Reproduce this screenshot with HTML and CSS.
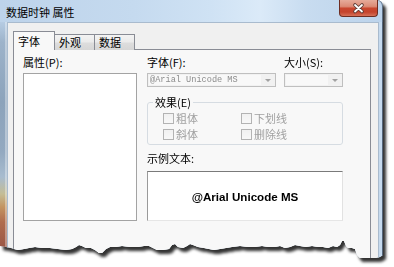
FILE: index.html
```html
<!DOCTYPE html>
<html lang="zh">
<head>
<meta charset="utf-8">
<title>数据时钟 属性</title>
<link rel="stylesheet" href="styles.css">
</head>
<body>
<div class="shadow">
  <div class="window">
    <div class="titlebar">
      <span class="title">数据时钟 属性</span>
      <div class="close">
        <svg width="39" height="17" viewBox="0 0 39 17">
          <path d="M16 5 L23 11.5 M23 5 L16 11.5" stroke="#5a3a34" stroke-width="3.6" stroke-linecap="round" fill="none"/>
          <path d="M16 5 L23 11.5 M23 5 L16 11.5" stroke="#ffffff" stroke-width="1.8" stroke-linecap="round" fill="none"/>
        </svg>
      </div>
    </div>
    <div class="frame-body">
      <div class="lframe"></div>
      <div class="client">
        <div class="tabs">
          <div class="tab active">字体</div>
          <div class="tab">外观</div>
          <div class="tab">数据</div>
        </div>
        <div class="page">
          <div class="col-left">
            <div class="label">属性(P):</div>
            <div class="listbox"></div>
          </div>
          <div class="col-right">
            <div class="row">
              <div class="field font-field">
                <div class="label">字体(F):</div>
                <div class="combo">
                  <span class="combo-text">@Arial Unicode MS</span>
                  <span class="arrow-area"><span class="arrow"></span></span>
                </div>
              </div>
              <div class="field size-field">
                <div class="label">大小(S):</div>
                <div class="combo">
                  <span class="combo-text"></span>
                  <span class="arrow-area"><span class="arrow"></span></span>
                </div>
              </div>
            </div>
            <fieldset class="group">
              <legend>效果(E)</legend>
              <div class="checks">
                <div class="check"><span class="box"></span>粗体</div>
                <div class="check"><span class="box"></span>下划线</div>
                <div class="check"><span class="box"></span>斜体</div>
                <div class="check"><span class="box"></span>删除线</div>
              </div>
            </fieldset>
            <div class="label sample-label">示例文本:</div>
            <div class="preview">@Arial Unicode MS</div>
          </div>
        </div>
      </div>
      <div class="rframe"></div>
    </div>
  </div>
</div>
</body>
</html>
```

FILE: styles.css
```css
html, body {
  margin: 0;
  padding: 0;
}
body {
  width: 394px;
  height: 267px;
  overflow: hidden;
  background: #ffffff;
  font-family: "Noto Sans CJK SC", "Noto Sans", sans-serif;
  font-size: 11px;
  color: #000;
}
.shadow {
  width: 383px;
  height: 262px;
  filter: drop-shadow(3px 4px 1.5px rgba(0, 0, 0, 0.8));
}
.window {
  width: 383px;
  height: 262px;
  display: flex;
  flex-direction: column;
  border-radius: 0 6px 0 0;
  background: #c5d9ee;
  clip-path: polygon(0 0, 383px 0, 383px 255px, 380px 257px, 376px 258px, 368px 258px, 360px 258px, 357px 255px, 355px 249px, 352px 248px, 348px 248px, 346px 246px, 344px 241px, 342px 241px, 340px 245px, 337px 247px, 333px 246px, 328px 248px, 323px 247px, 318px 247px, 312px 246px, 306px 247px, 300px 246px, 295px 245px, 290px 247px, 285px 248px, 280px 246px, 275px 247px, 268px 247px, 262px 246px, 255px 247px, 248px 247px, 240px 246px, 232px 247px, 226px 248px, 220px 249px, 214px 250px, 209px 249px, 204px 248px, 198px 247px, 193px 245px, 190px 244px, 187px 246px, 183px 248px, 178px 247px, 175px 244px, 172px 245px, 169px 249px, 163px 250px, 157px 250px, 153px 248px, 149px 246px, 144px 246px, 138px 247px, 130px 247px, 122px 246px, 116px 247px, 110px 247px, 106px 249px, 102px 253px, 99px 253px, 95px 250px, 91px 248px, 86px 248px, 82px 246px, 79px 245px, 76px 247px, 72px 249px, 66px 250px, 58px 249px, 50px 248px, 42px 248px, 35px 247px, 29px 248px, 24px 249px, 18px 250px, 14px 249px, 11px 248px, 6px 247px, 0 246px);
}
.titlebar {
  height: 22px;
  flex: none;
  display: flex;
  align-items: flex-start;
  background: linear-gradient(to right, #bdd3ea 0%, #c5daef 35%, #cfe2f4 55%, #dbeaf8 68%, #c8dcf0 80%, #bcd3eb 100%);
  border-radius: 0 6px 0 0;
  box-shadow: inset -1px 0 0 #5f7186;
}
.title {
  margin: 4px 0 0 6px;
  line-height: 16px;
  font-size: 11px;
  color: #000;
}
.close {
  margin-left: auto;
  margin-right: 5px;
  width: 39px;
  height: 17px;
  box-sizing: border-box;
  border: 1px solid #6e2d22;
  border-top: none;
  border-radius: 0 0 4px 4px;
  background: linear-gradient(to bottom, #e6ab9a 0%, #dc8b76 40%, #c9472f 52%, #c4432c 75%, #d67158 100%);
  display: flex;
  align-items: center;
  justify-content: center;
}
.close svg {
  display: block;
  flex: none;
  margin: 0 -1px;
}
.frame-body {
  flex: 1;
  display: flex;
  min-height: 0;
}
.lframe {
  width: 7px;
  flex: none;
  background: linear-gradient(to bottom, #b6cce3 0px, #9db3ca 20px, #8ca3bb 80px, #93a9c0 130px, #a8bccf 155px, #c4bd95 172px, #c39461 185px, #b06c4e 200px, #9b5746 225px, #6d6060 246px);
  box-shadow: inset -2px 0 0 rgba(255, 255, 255, 0.35);
}
.rframe {
  width: 4px;
  flex: none;
  background: #c6daee;
  box-shadow: inset -1px 0 0 #55677c;
}
.client {
  width: 372px;
  box-sizing: border-box;
  flex: none;
  background: #f0f0f0;
  border: 1px solid #a9bbce;
  border-bottom: none;
  padding: 8px 7px 0 5px;
  display: flex;
  flex-direction: column;
}
.tabs {
  display: flex;
  align-items: flex-end;
  height: 19px;
  margin-bottom: -1px;
  position: relative;
  z-index: 1;
}
.tab {
  height: 16px;
  box-sizing: border-box;
  border: 1px solid #898c95;
  border-bottom: none;
  border-left: none;
  padding: 0 13px 0 4px;
  line-height: 15px;
  background: linear-gradient(to bottom, #f3f3f3 0%, #ebebeb 45%, #dddddd 55%, #d6d6d6 100%);
}
.tab.active {
  height: 19px;
  border-left: 1px solid #898c95;
  padding: 1px 14px 0 4px;
  line-height: 16px;
  background: #f8f8f8;
}
.page {
  flex: 1;
  background: #f8f8f8;
  border: 1px solid #898c95;
  border-bottom: none;
  padding: 5px 0 0 9px;
  display: flex;
  gap: 10px;
}
.col-left {
  width: 114px;
  display: flex;
  flex-direction: column;
}
.label {
  line-height: 14px;
  height: 14px;
  margin-bottom: 4px;
  white-space: nowrap;
}
.listbox {
  height: 148px;
  box-sizing: border-box;
  background: #ffffff;
  border: 1px solid #a3a3a3;
}
.col-right {
  width: 196px;
  display: flex;
  flex-direction: column;
}
.row {
  display: flex;
  gap: 8px;
}
.font-field {
  width: 129px;
}
.size-field {
  width: 59px;
}
.combo {
  height: 14px;
  box-sizing: border-box;
  border: 1px solid #bfbfbf;
  background: #f1f1f1;
  display: flex;
  align-items: stretch;
}
.combo-text {
  flex: 1;
  margin: 1px 0 1px 1px;
  padding-left: 1px;
  background: #f8f8f8;
  font-family: "Liberation Mono", monospace;
  font-size: 8.6px;
  line-height: 10px;
  color: #8c8c8c;
  white-space: nowrap;
  overflow: hidden;
}
.arrow-area {
  width: 14px;
  flex: none;
  display: flex;
  align-items: center;
  justify-content: center;
}
.arrow {
  width: 0;
  height: 0;
  border-left: 3px solid transparent;
  border-right: 3px solid transparent;
  border-top: 3px solid #a2a2a2;
  margin-top: 1px;
}
.group {
  margin: 8px 0 0;
  padding: 1px 0 2px 5px;
  border: 1px solid #d6dce2;
  border-radius: 3px;
  min-width: 0;
}
.group legend {
  padding: 0 2px;
  line-height: 14px;
  height: 14px;
  font-size: 11px;
}
.checks {
  margin-left: 10px;
  display: grid;
  grid-template-columns: 78px auto;
  grid-auto-rows: 16px;
}
.check {
  display: flex;
  align-items: center;
  gap: 2px;
  color: #a0a0a0;
  line-height: 14px;
  white-space: nowrap;
}
.box {
  width: 11px;
  height: 11px;
  box-sizing: border-box;
  border: 1px solid #b3b3b3;
  background: linear-gradient(to bottom, #f1f1f1, #f8f8f8);
  flex: none;
}
.sample-label {
  margin-top: 6px;
  margin-bottom: 6px;
}
.preview {
  height: 50px;
  box-sizing: border-box;
  background: #ffffff;
  border: 1px solid;
  border-color: #7a7a7a #e2e2e2 #e6e6e6 #9a9a9a;
  display: flex;
  align-items: center;
  justify-content: center;
  font-family: "Liberation Sans", Arial, sans-serif;
  font-weight: bold;
  font-size: 11.6px;
  color: #000;
}
```
